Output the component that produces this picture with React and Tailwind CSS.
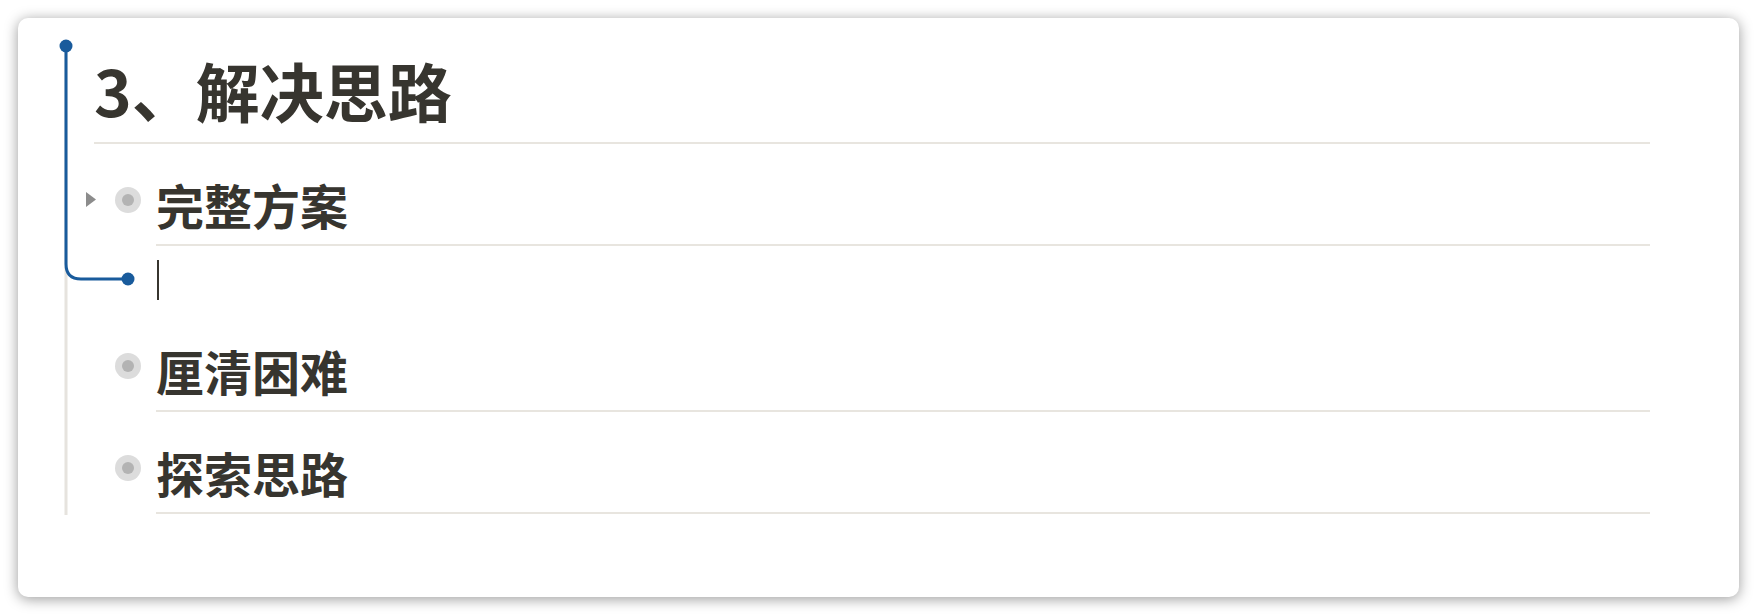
import React from "react";

const TEXT = "text-[#37352f]";
const LINE = "border-b-2 border-[#e8e5df]";

// little gray disclosure arrow, only the first item has children
const Caret = () => (
  <svg width="10" height="15" viewBox="0 0 10 15" className="mt-[5px] ml-[68px] shrink-0">
    <polygon points="0,0 10,7.5 0,15" fill="#8c8c8c" />
  </svg>
);

const Bullet = ({ withCaret }) => (
  <div className="w-[138px] shrink-0 flex pt-[13px]">
    {withCaret ? <Caret /> : <span className="w-[78px] shrink-0" />}
    <span className="ml-[19px] w-[26px] h-[26px] rounded-full bg-[#dcdcdc] flex items-center justify-center shrink-0">
      <span className="w-[12px] h-[12px] rounded-full bg-[#b3b3b3]" />
    </span>
  </div>
);

const Item = ({ label, withCaret }) => (
  <div className="flex pt-[30px]">
    <Bullet withCaret={withCaret} />
    <div className={`flex-1 pb-[10px] ${LINE}`}>
      <div className={`text-[48px] leading-[60px] font-bold ${TEXT}`}>{label}</div>
    </div>
  </div>
);

// hierarchy guide: gray rail plus the blue "moving block" connector
const Guides = () => (
  <svg
    className="absolute left-0 top-0 pointer-events-none"
    width="140"
    height="520"
    viewBox="0 0 140 520"
  >
    <line x1="48" y1="28" x2="48" y2="497" stroke="#e6e3de" strokeWidth="3" />
    <path
      d="M48 28 V246 Q48 261 63 261 H110"
      fill="none"
      stroke="#195b9c"
      strokeWidth="3"
    />
    <circle cx="48" cy="28" r="6.5" fill="#195b9c" />
    <circle cx="110" cy="261" r="6.5" fill="#195b9c" />
  </svg>
);

export default function App() {
  return (
    <div
      className="w-[1758px] h-[616px] bg-white pt-[18px] pl-[18px] pr-[19px] pb-[19px]"
      style={{ fontFamily: '"Noto Sans CJK SC", "Noto Sans", sans-serif' }}
    >
      <div className="relative h-full bg-white rounded-[10px] shadow-[0_2px_14px_rgba(0,0,0,0.4)] pt-[31px] pr-[89px]">
        <Guides />

        <div className="flex">
          <div className="w-[76px] shrink-0" />
          <div className={`flex-1 pb-[13px] ${LINE}`}>
            <h1 className={`text-[64px] leading-[80px] font-bold ${TEXT}`}>3、解决思路</h1>
          </div>
        </div>

        <Item label="完整方案" withCaret />

        <div className="flex">
          <div className="w-[138px] shrink-0" />
          <div className="flex-1 h-[64px] pt-[14px] pl-[1px]">
            <span className="block w-[2px] h-[40px] bg-[#37352f]" />
          </div>
        </div>

        <Item label="厘清困难" />
        <Item label="探索思路" />
      </div>
    </div>
  );
}
